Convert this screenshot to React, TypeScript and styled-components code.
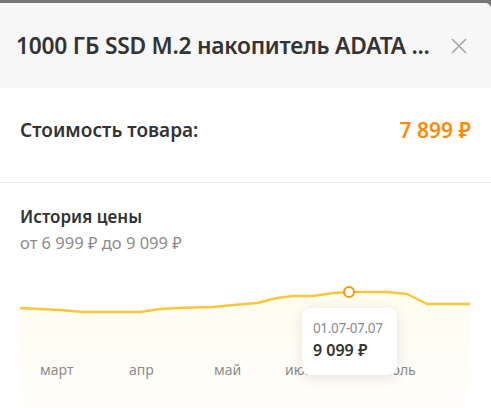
import React from "react";
import styled, { createGlobalStyle } from "styled-components";

const Global = createGlobalStyle`
  html, body { margin: 0; padding: 0; background: #777; }
  body { font-family: "Noto Sans", "Open Sans", sans-serif; overflow: hidden; }
  * { box-sizing: border-box; }
`;

const Modal = styled.div`
  margin-top: 3px;
  width: 491px;
  height: 405px;
  background: #fff;
  border-radius: 0 6px 0 0;
  overflow: hidden;
  display: flex;
  flex-direction: column;
  & > * { flex-shrink: 0; }
`;

const Header = styled.div`
  height: 85px;
  background: #f7f7f7;
  display: flex;
  align-items: center;
  justify-content: space-between;
  padding: 0 24px 0 16px;
`;

const Title = styled.h1`
  margin: 0;
  font-size: 22.8px;
  font-weight: 600;
  color: #333;
  letter-spacing: -0.25px;
  white-space: nowrap;
`;

const Close = styled.button`
  border: 0;
  background: none;
  padding: 0;
  width: 16px;
  height: 16px;
  display: flex;
  cursor: pointer;
`;

const PriceRow = styled.div`
  display: flex;
  justify-content: space-between;
  align-items: center;
  padding: 29px 20px 39px 20px;
  line-height: 26px;
  border-bottom: 1px solid #ececec;
`;

const PriceLabel = styled.span`
  font-size: 19px;
  font-weight: 600;
  color: #333;
`;

const PriceValue = styled.span`
  font-size: 21px;
  font-weight: 600;
  color: #ff8a00;
`;

const History = styled.div`
  padding: 22px 20px 0;
  display: flex;
  flex-direction: column;
`;

const HistoryTitle = styled.div`
  font-size: 17px;
  font-weight: 600;
  color: #333;
  line-height: 24px;
`;

const HistorySub = styled.div`
  margin-top: 2px;
  font-size: 16.5px;
  color: #8c8c8c;
  line-height: 24px;
`;

const Chart = styled.div`
  position: relative;
  margin-top: 25px;
  height: 130px;
  width: 450px;
`;

const ChartSvg = styled.svg`
  position: absolute;
  left: 0;
  top: 0;
`;

const Months = styled.div`
  position: relative;
  padding-top: 80px;
  font-size: 14px;
  line-height: 20px;
  color: #8c8c8c;
`;

const Month = styled.span<{ $x: number }>`
  position: absolute;
  left: ${(p) => p.$x}px;
`;

const Tooltip = styled.div`
  position: absolute;
  left: 282px;
  top: 28px;
  width: 95px;
  height: 67px;
  background: #fff;
  border-radius: 8px;
  box-shadow: 0 3px 14px rgba(0, 0, 0, 0.11);
  padding: 10px 0 0 11px;
  display: flex;
  flex-direction: column;
  white-space: nowrap;
`;

const TipDate = styled.span`
  font-size: 13.5px;
  letter-spacing: -0.35px;
  color: #8c8c8c;
  line-height: 20px;
`;

const TipPrice = styled.span`
  font-size: 16px;
  font-weight: 600;
  color: #333;
  line-height: 24px;
`;

const pts: [number, number][] = [
  [0, 23], [40, 25], [63, 27], [120, 27], [140, 24], [157, 23], [193, 22],
  [213, 20], [237, 18], [257, 13], [273, 11], [293, 11], [313, 8], [330, 7],
  [367, 7], [387, 9], [407, 19], [450, 19],
];

const line = pts.map((p, i) => `${i ? "L" : "M"}${p[0]} ${p[1] + 5}`).join(" ");
const area = `${line} L450 130 L0 130 Z`;

export default function App() {
  return (
    <>
      <Global />
      <Modal>
        <Header>
          <Title>1000 ГБ SSD M.2 накопитель ADATA ...</Title>
          <Close aria-label="close">
            <svg width="16" height="16" viewBox="0 0 16 16">
              <path d="M1 1L15 15M15 1L1 15" stroke="#a5a5a5" strokeWidth="1.6" />
            </svg>
          </Close>
        </Header>
        <PriceRow>
          <PriceLabel>Стоимость товара:</PriceLabel>
          <PriceValue>7 899 ₽</PriceValue>
        </PriceRow>
        <History>
          <HistoryTitle>История цены</HistoryTitle>
          <HistorySub>от 6 999 ₽ до 9 099 ₽</HistorySub>
          <Chart>
            <ChartSvg width="450" height="130" viewBox="0 0 450 130">
              <defs>
                <linearGradient id="g" x1="0" y1="0" x2="0" y2="1">
                  <stop offset="0" stopColor="#fffcef" />
                  <stop offset="1" stopColor="#fffefb" />
                </linearGradient>
              </defs>
              <path d={area} fill="url(#g)" />
              <path d={line} fill="none" stroke="#ffc53a" strokeWidth="2.5" strokeLinejoin="round" />
              <circle cx="329" cy="12" r="5" fill="#fff" stroke="#f59a0a" strokeWidth="2" />
            </ChartSvg>
            <Months>
              <Month $x={20}>март</Month>
              <Month $x={109}>апр</Month>
              <Month $x={194}>май</Month>
              <Month $x={265}>июнь</Month>
              <Month $x={360}>июль</Month>
            </Months>
            <Tooltip>
              <TipDate>01.07-07.07</TipDate>
              <TipPrice>9 099 ₽</TipPrice>
            </Tooltip>
          </Chart>
        </History>
      </Modal>
    </>
  );
}
